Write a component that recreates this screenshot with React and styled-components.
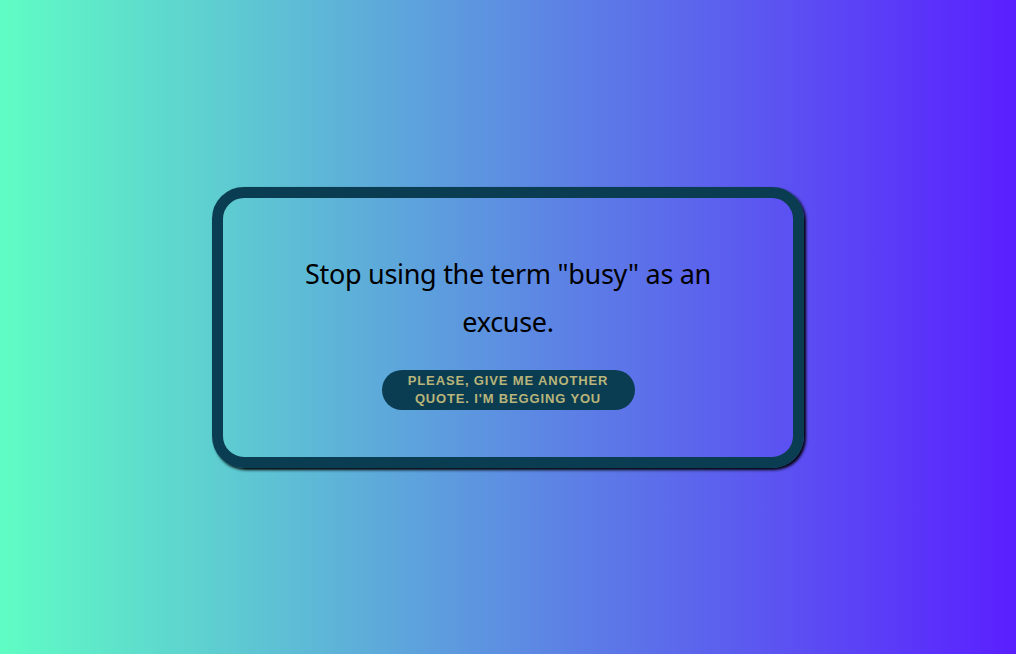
import React from 'react';
import styled, { createGlobalStyle } from 'styled-components';

const GlobalStyle = createGlobalStyle`
  html, body {
    margin: 0;
    padding: 0;
    height: 100%;
  }
  #root {
    height: 100%;
  }
`;

const Page = styled.main`
  height: 100vh;
  display: flex;
  align-items: center;
  justify-content: center;
  background: linear-gradient(to right, #5ffdc4, #5a1fff);
  font-family: 'Noto Sans', sans-serif;
`;

const Card = styled.section`
  box-sizing: border-box;
  width: 592px;
  height: 281px;
  border: 11px solid #0b3d52;
  border-radius: 32px;
  box-shadow: 2px 2px 3px #000;
  display: flex;
  flex-direction: column;
  align-items: center;
  justify-content: flex-start;
  padding: 52px 60px 0;
`;

const Quote = styled.p`
  margin: 0 0 24px;
  max-width: 430px;
  text-align: center;
  font-size: 27px;
  line-height: 48px;
  color: #000;
  letter-spacing: -0.3px;
`;

const QuoteButton = styled.button`
  width: 253px;
  height: 40px;
  border: none;
  border-radius: 20px;
  background: #0b3d52;
  color: #b8b57a;
  font-family: 'Liberation Sans', Arial, sans-serif;
  font-weight: bold;
  font-size: 13px;
  line-height: 18px;
  letter-spacing: 0.85px;
  text-transform: uppercase;
  cursor: pointer;
  padding: 0 20px;
`;

export default function App() {
  return (
    <>
      <GlobalStyle />
      <Page>
        <Card>
          <Quote>Stop using the term "busy" as an excuse.</Quote>
          <QuoteButton>Please, give me another quote. I'm begging you</QuoteButton>
        </Card>
      </Page>
    </>
  );
}
